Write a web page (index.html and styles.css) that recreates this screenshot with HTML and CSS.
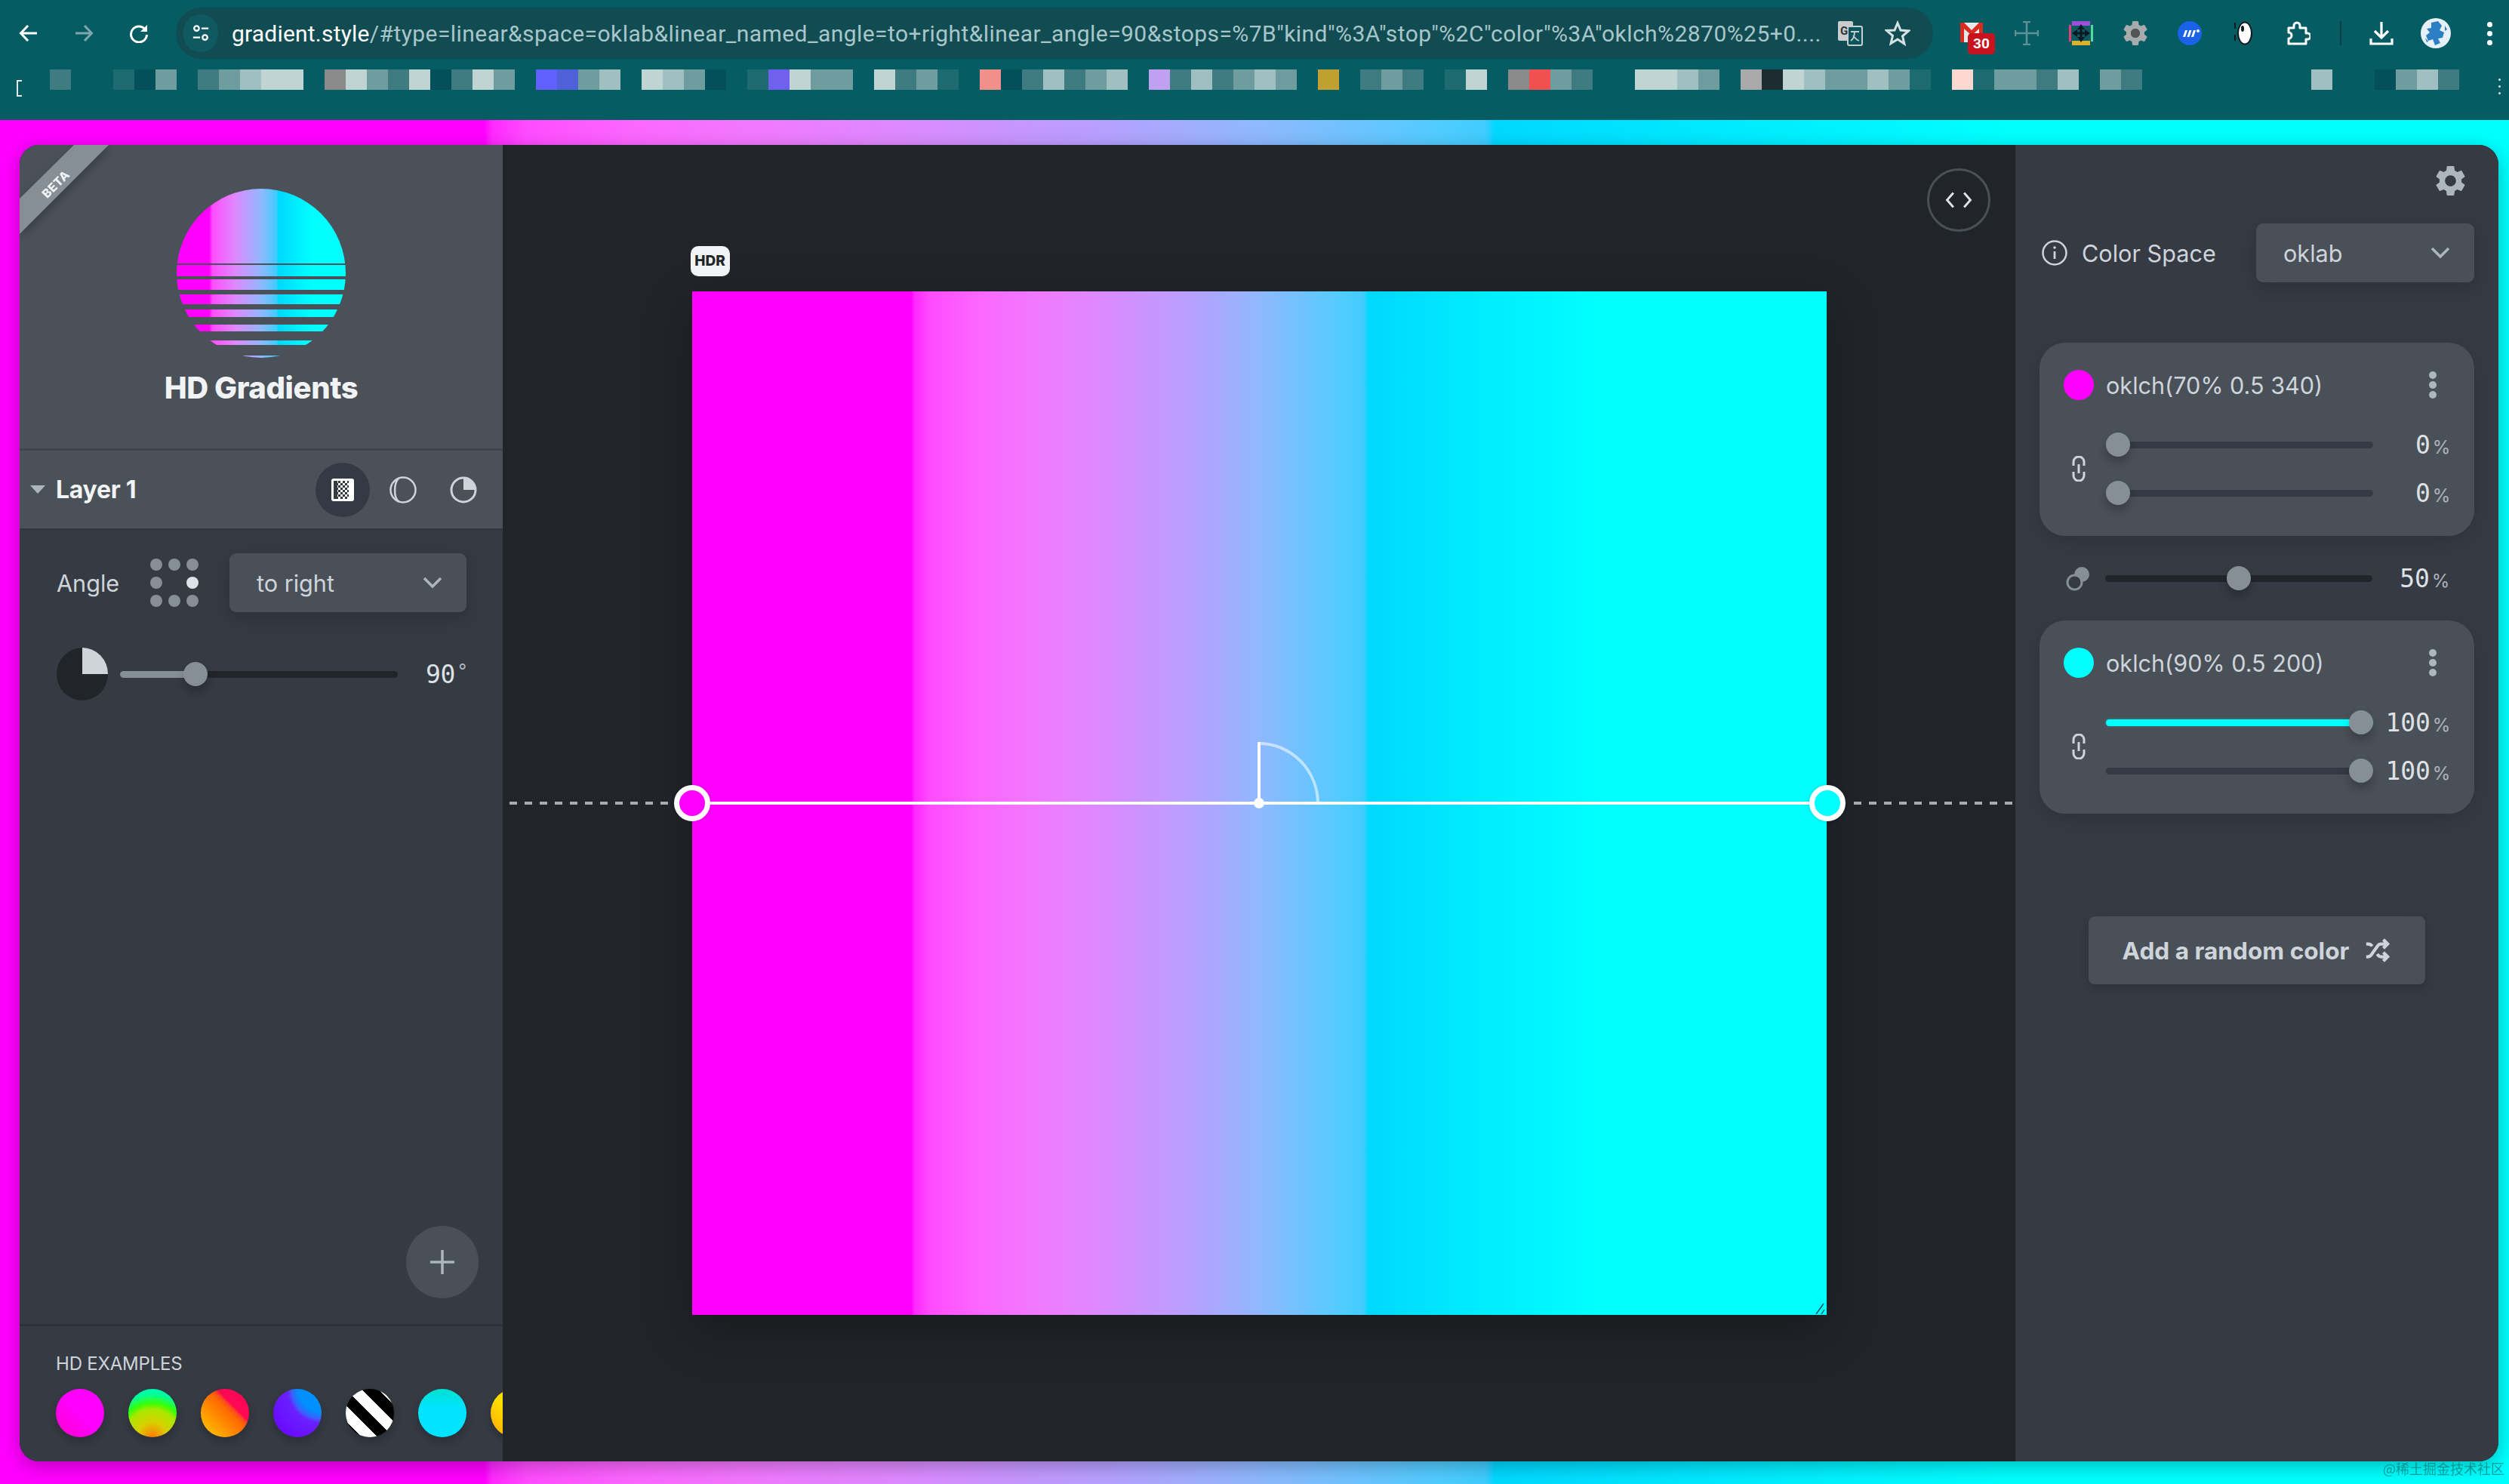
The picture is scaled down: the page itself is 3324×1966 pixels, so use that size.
FILE: index.html
```html
<!DOCTYPE html>
<html lang="en">
<head>
<meta charset="utf-8">
<title>HD Gradients</title>
<link rel="stylesheet" href="styles.css">
</head>
<body>
<header class="chrome">
  <div class="toolbar">
    <div class="nav">
      <svg class="nav-icon" viewBox="0 0 26 26"><path d="M24 13H3M12 3 2.500 13 12 23" fill="none" stroke="#fff" stroke-width="3"/></svg>
      <svg class="nav-icon" viewBox="0 0 26 26"><path d="M2 13h21M14 3l9.500 10L14 23" fill="none" stroke="#7fa6aa" stroke-width="3"/></svg>
      <svg class="nav-icon" viewBox="0 0 26 26"><path d="M22 9a10.500 10.500 0 1 0 1.500 6" fill="none" stroke="#fff" stroke-width="3"/><path d="M24 2v9h-9z" fill="#fff"/></svg>
    </div>
    <div class="omnibox">
      <span class="site-chip"><svg viewBox="0 0 26 26" class="chip-icon"><circle cx="7" cy="6" r="3.500" fill="none" stroke="#fff" stroke-width="2.500"/><path d="M14 6h10M2 19h10" stroke="#fff" stroke-width="2.500"/><circle cx="19" cy="19" r="3.500" fill="none" stroke="#fff" stroke-width="2.500"/></svg></span>
      <span class="url"><span class="host">gradient.style</span>/#type=linear&amp;space=oklab&amp;linear_named_angle=to+right&amp;linear_angle=90&amp;stops=%7B"kind"%3A"stop"%2C"color"%3A"oklch%2870%25+0....</span>
      <svg class="translate" viewBox="0 0 34 34"><rect x="1" y="1" width="20" height="26" rx="2" fill="#c9cdce"/><rect x="14" y="8" width="19" height="25" rx="2" fill="#0a555b" stroke="#c9cdce" stroke-width="2"/><text x="4" y="19" class="translate-g">G</text><path d="M18 15h11M23 15c0 6-2 10-5 12M21 20c2 3 5 6 8 7" fill="none" stroke="#c9cdce" stroke-width="1.800"/></svg>
      <svg class="star" viewBox="0 0 34 34"><path d="M17 3.500l4 9.500 10.500.9-8 6.900 2.400 10.200L17 25l-8.900 5.500 2.400-10.200-8-6.900L13 13z" fill="none" stroke="#d5e2e3" stroke-width="3"/></svg>
    </div>
    <div class="exts">
      <span class="ext"><svg class="ext-icon" viewBox="0 0 32 32"><rect x="0" y="2" width="30" height="26" fill="#e8e8e8"/><path d="M0 2h5l10 10L25 2h5v26h-5V10L15 19 5 10v18H0z" fill="#d92b20"/></svg><span class="badge">30</span></span>
      <span class="ext"><svg class="ext-icon" viewBox="0 0 32 32"><path d="M16 1v30M1 16h30M11 1h10M11 31h10M1 12v8M31 12v8" stroke="#5f9094" stroke-width="2.500" fill="none"/></svg></span>
      <span class="ext"><svg class="ext-icon" viewBox="0 0 32 32"><rect width="32" height="32" fill="#0e5a60"/><rect x="4" width="24" height="6" fill="#9b4fdc"/><rect x="4" y="26" width="24" height="6" fill="#d9b32e"/><rect y="5" width="3" height="22" fill="#e0407a"/><rect x="29" y="5" width="3" height="22" fill="#4fdc9c"/><path d="M16 4l5 7h-3.500v3.500H21V11l7 5-7 5v-3.500h-3.500V21H21l-5 7-5-7h3.500v-3.500H11V21l-7-5 7-5v3.500h3.500V11H11z" fill="#0a1a20"/></svg></span>
      <span class="ext"><svg class="ext-icon" viewBox="2.400 2.400 19.200 19.200"><path class="gear-path" fill="#a8abac" d="M19.140 12.940c.04-.3.06-.61.06-.94 0-.32-.02-.64-.07-.94l2.030-1.580a.49.49 0 0 0 .12-.61l-1.920-3.320a.488.488 0 0 0-.59-.22l-2.390.96c-.5-.38-1.030-.7-1.620-.94l-.36-2.540a.484.484 0 0 0-.48-.41h-3.840c-.24 0-.43.17-.47.41l-.36 2.540c-.59.24-1.130.57-1.620.94l-2.390-.96c-.22-.08-.47 0-.59.22L2.740 8.870c-.12.21-.08.47.12.61l2.030 1.580c-.05.3-.09.63-.09.94s.02.64.07.94l-2.030 1.580a.49.49 0 0 0-.12.61l1.920 3.320c.12.22.37.29.59.22l2.390-.96c.5.38 1.030.7 1.620.94l.36 2.540c.05.24.24.41.48.41h3.840c.24 0 .44-.17.47-.41l.36-2.540c.59-.24 1.130-.56 1.620-.94l2.390.96c.22.08.47 0 .59-.22l1.920-3.320c.12-.22.07-.47-.12-.61l-2.010-1.580zM12 15.600c-1.980 0-3.600-1.620-3.600-3.600s1.620-3.600 3.600-3.600 3.600 1.620 3.600 3.600-1.620 3.600-3.600 3.600z"/><circle cx="12" cy="12" r="3.600" fill="#555"/></svg></span>
      <span class="ext"><svg class="ext-icon" viewBox="0 0 32 32"><circle cx="16" cy="16" r="16" fill="#1a62e8"/><path d="M7 21l3-9h3l-3 9zM12.500 21l3-9h3l-3 9zM18 21l3-9h3l-3 9z" fill="#fff"/><circle cx="27" cy="13" r="2" fill="#fff"/></svg></span>
      <span class="ext"><svg class="ext-icon" viewBox="0 0 32 32"><path d="M4 2v8M4 18v8" stroke="#0a1a20" stroke-width="2"/><ellipse cx="17" cy="16" rx="9" ry="14.500" fill="#fff" stroke="#0a1a20" stroke-width="2"/><ellipse cx="14" cy="10" rx="2" ry="4" fill="#0a1a20"/></svg></span>
      <span class="ext"><svg class="ext-icon" viewBox="0 0 32 32"><path d="M3 9h7V6a4 4 0 0 1 8 0v3h8v7h2a4 4 0 0 1 0 8h-2v6H3v-7a4 4 0 0 0 0-8z" fill="none" stroke="#fff" stroke-width="3" stroke-linejoin="round"/></svg></span>
      <span class="sep"></span>
      <span class="ext ext-dl"><svg class="ext-icon" viewBox="0 0 34 34"><path d="M17 2v20M8 14l9 9 9-9M3 24v7h28v-7" fill="none" stroke="#fff" stroke-width="3.200"/></svg></span>
      <span class="ext"><svg class="avatar" viewBox="0 0 40 40"><circle cx="20" cy="20" r="20" fill="#e6f0f8"/><path d="M14 6l9-2 5 6-3 6 6 3-2 7-6 1 3 6-7 3-3-8-6 2-3-7 5-4-4-5 6-1zM32 10l3 5-3 2zM6 26l4 5-2 1z" fill="#2d7fc4"/></svg></span>
      <span class="ext ext-last"><span class="kebab kebab-light"><i></i><i></i><i></i></span></span>
    </div>
  </div>
  <div class="bookmarks">
    <span class="bm-bracket"></span>
    <div class="bm-cells">
      <i class="a"></i><i></i><i></i><i class="z"></i><i class="e"></i><i class="b"></i><i></i><i class="a"></i><i class="b"></i><i class="c"></i><i class="d"></i><i class="d"></i><i></i><i class="gr"></i><i class="d"></i><i class="b"></i><i class="a"></i><i class="d"></i><i class="e"></i><i class="a"></i><i class="d"></i><i class="b"></i><i></i><i class="v1"></i><i class="v2"></i><i class="b"></i><i class="c"></i><i></i><i class="d"></i><i class="c"></i><i class="b"></i><i class="e"></i><i></i><i class="z"></i><i class="v3"></i><i class="d"></i><i class="b"></i><i class="b"></i><i></i><i class="d"></i><i class="a"></i><i class="b"></i><i class="z"></i><i></i><i class="p1"></i><i class="e"></i><i class="a"></i><i class="c"></i><i class="a"></i><i class="b"></i><i class="c"></i><i></i><i class="v4"></i><i class="a"></i><i class="c"></i><i class="a"></i><i class="b"></i><i class="c"></i><i class="b"></i><i></i><i class="g1"></i><i></i><i class="a"></i><i class="b"></i><i class="a"></i><i></i><i class="z"></i><i class="d"></i><i></i><i class="gr"></i><i class="r1"></i><i class="b"></i><i class="a"></i><i></i><i></i><i class="d"></i><i class="d"></i><i class="c"></i><i class="b"></i><i></i><i class="gr2"></i><i class="k"></i><i class="d"></i><i class="c"></i><i class="b"></i><i class="b"></i><i class="c"></i><i class="b"></i><i class="z"></i><i></i><i class="p2"></i><i class="z"></i><i class="b"></i><i class="b"></i><i class="a"></i><i class="c"></i><i></i><i class="b"></i><i class="a"></i><i></i><i></i><i></i><i></i><i></i><i></i><i></i><i></i><i class="c"></i><i></i><i></i><i class="e"></i><i class="b"></i><i class="c"></i><i class="a"></i>
    </div>
    <span class="kebab kebab-tiny"><i></i><i></i><i></i></span>
  </div>
</header>

<div class="page">
  <main class="app">
    <aside class="sidebar">
      <svg class="ribbon" viewBox="0 0 118 118"><polygon points="72,0 118,0 0,118 0,71" fill="#868e96"/><text x="0" y="0" class="ribbon-text" transform="translate(52 56) rotate(-45)">BETA</text></svg>
      <section class="brand">
        <svg class="logo" viewBox="0 0 224 224">
          <defs>
            <linearGradient id="hdg" x1="0" x2="1" y1="0" y2="0">
              <stop offset=".193" stop-color="#f0f"/><stop offset=".21" stop-color="#ff4cff"/><stop offset=".345" stop-color="#df88ff"/><stop offset=".5" stop-color="#90b8ff"/><stop offset=".592" stop-color="#40ccff"/><stop offset=".6" stop-color="#00d8ff"/><stop offset=".8" stop-color="#0ff"/>
            </linearGradient>
            <clipPath id="sun"><rect y="0" width="224" height="99"/><rect y="101" width="224" height="15"/><rect y="120" width="224" height="14"/><rect y="140" width="224" height="13"/><rect y="160" width="224" height="10"/><rect y="180" width="224" height="9"/><rect y="201" width="224" height="6"/><rect y="221" width="224" height="3"/></clipPath>
          </defs>
          <circle cx="112" cy="112" r="112" fill="url(#hdg)" clip-path="url(#sun)"/>
        </svg>
        <h1 class="title">HD Gradients</h1>
      </section>

      <div class="layer-head">
        <span class="tri"></span>
        <span class="layer-name">Layer 1</span>
        <div class="tabs">
          <span class="tab tab-on"><svg class="tab-icon-sm" viewBox="0 0 30 30"><defs><pattern id="chk" width="6" height="6" patternUnits="userSpaceOnUse"><rect width="3" height="3" fill="#343a40"/><rect x="3" y="3" width="3" height="3" fill="#343a40"/></pattern></defs><rect width="30" height="30" rx="3" fill="#fff"/><rect x="3" y="3" width="5" height="24" fill="#343a40"/><rect x="8" y="3" width="15" height="24" fill="url(#chk)"/></svg></span>
          <span class="tab"><svg class="tab-icon" viewBox="0 0 36 36"><circle cx="18" cy="18" r="16.500" fill="none" stroke="#ced4da" stroke-width="2.500"/><path d="M12 3C6 8 5 28 12 33" fill="none" stroke="#ced4da" stroke-width="2.500"/></svg></span>
          <span class="tab"><svg class="tab-icon" viewBox="0 0 36 36"><circle cx="18" cy="18" r="16" fill="none" stroke="#ced4da" stroke-width="3"/><path d="M18 18V2a16 16 0 0 1 16 16z" fill="#ced4da"/></svg></span>
        </div>
      </div>

      <div class="layer-body">
        <div class="angle-row">
          <span class="angle-label">Angle</span>
          <div class="dots"><i></i><i></i><i></i><i></i><b></b><i class="dot-on"></i><i></i><i></i><i></i></div>
          <div class="select select-angle"><span>to right</span><svg class="chev" viewBox="0 0 26 16"><path d="M2 2l11 11L24 2" fill="none" stroke="#adb5bd" stroke-width="3.500"/></svg></div>
        </div>
        <div class="angle-slider">
          <span class="pie"></span>
          <div class="track track-angle"><span class="fill fill-angle"></span><span class="thumb thumb-angle"></span></div>
          <span class="deg">90<small>°</small></span>
        </div>
        <button class="add-layer"><svg viewBox="0 0 34 34" class="plus"><path d="M17 1v32M1 17h32" stroke="#adb5bd" stroke-width="3.500"/></svg></button>
      </div>

      <footer class="examples">
        <div class="ex-label">HD EXAMPLES</div>
        <div class="ex-row">
          <span class="ex ex1"></span><span class="ex ex2"></span><span class="ex ex3"></span><span class="ex ex4"></span><span class="ex ex5"></span><span class="ex ex6"></span><span class="ex ex7"></span>
        </div>
      </footer>
    </aside>

    <section class="stage">
      <button class="code-btn"><svg viewBox="0 0 32 20" class="code-icon"><path d="M10 2 3 10l7 8M22 2l7 8-7 8" fill="none" stroke="#dee2e6" stroke-width="2.500"/></svg></button>
      <div class="canvas">
        <span class="hdr">HDR</span>
        <div class="axis">
          <span class="dash dash-l"></span>
          <span class="line"></span>
          <span class="dash dash-r"></span>
          <span class="handle handle-l"></span>
          <span class="handle handle-r"></span>
          <span class="pivot"></span>
        </div>
        <svg class="arc" viewBox="0 0 84 84"><path d="M2 2a78 80 0 0 1 78 80" fill="none" stroke="#fff" stroke-opacity=".55" stroke-width="4"/><path d="M2 0v84" stroke="#fff" stroke-width="4"/></svg>
        <svg class="grip" viewBox="0 0 14 16"><path d="M1 15 11 1M8 15l4-6" stroke="#0b4a52" stroke-width="1.300"/></svg>
      </div>
    </section>

    <aside class="panel">
      <div class="gear-row"><svg class="gear" viewBox="2.400 2.400 19.200 19.200"><path fill="#adb5bd" d="M19.140 12.940c.04-.3.06-.61.06-.94 0-.32-.02-.64-.07-.94l2.030-1.580a.49.49 0 0 0 .12-.61l-1.920-3.320a.488.488 0 0 0-.59-.22l-2.390.96c-.5-.38-1.030-.7-1.620-.94l-.36-2.540a.484.484 0 0 0-.48-.41h-3.840c-.24 0-.43.17-.47.41l-.36 2.540c-.59.24-1.130.57-1.620.94l-2.390-.96c-.22-.08-.47 0-.59.22L2.740 8.870c-.12.21-.08.47.12.61l2.030 1.580c-.05.3-.09.63-.09.94s.02.64.07.94l-2.030 1.580a.49.49 0 0 0-.12.61l1.920 3.320c.12.22.37.29.59.22l2.390-.96c.5.38 1.030.7 1.620.94l.36 2.540c.05.24.24.41.48.41h3.840c.24 0 .44-.17.47-.41l.36-2.540c.59-.24 1.130-.56 1.620-.94l2.390.96c.22.08.47 0 .59-.22l1.920-3.320c.12-.22.07-.47-.12-.61l-2.010-1.580zM12 15.600c-1.980 0-3.600-1.620-3.600-3.600s1.620-3.600 3.600-3.600 3.600 1.620 3.600 3.600-1.620 3.600-3.600 3.600z"/></svg></div>

      <div class="space-row">
        <svg class="info" viewBox="0 0 34 34"><circle cx="17" cy="17" r="15.500" fill="none" stroke="#ced4da" stroke-width="2.500"/><path d="M17 15v10" stroke="#ced4da" stroke-width="2.800"/><circle cx="17" cy="10" r="1.800" fill="#ced4da"/></svg>
        <span class="space-label">Color Space</span>
        <div class="select select-space"><span>oklab</span><svg class="chev" viewBox="0 0 26 16"><path d="M2 2l11 11L24 2" fill="none" stroke="#adb5bd" stroke-width="3.500"/></svg></div>
      </div>

      <div class="card">
        <div class="card-head">
          <span class="swatch swatch-m"></span>
          <span class="color-name">oklch(70% 0.5 340)</span>
          <span class="kebab"><i></i><i></i><i></i></span>
        </div>
        <div class="sliders">
          <svg class="link" viewBox="0 0 18 34"><path d="M2 13V8a7 7 0 0 1 14 0v5M2 21v5a7 7 0 0 0 14 0v-5M9 11v12" fill="none" stroke="#ced4da" stroke-width="3"/></svg>
          <div class="slider-stack">
            <div class="slider-row"><div class="track"><span class="thumb thumb-start"></span></div><span class="val">0<small>%</small></span></div>
            <div class="slider-row"><div class="track"><span class="thumb thumb-start"></span></div><span class="val">0<small>%</small></span></div>
          </div>
        </div>
      </div>

      <div class="mix-row">
        <svg class="mix" viewBox="0 0 32 33"><circle cx="21" cy="11" r="10" fill="#868e96"/><circle cx="11.500" cy="21.500" r="9.500" fill="#343a43" stroke="#868e96" stroke-width="3"/></svg>
        <div class="slider-row"><div class="track track-dark"><span class="thumb thumb-mid"></span></div><span class="val">50<small>%</small></span></div>
      </div>

      <div class="card">
        <div class="card-head">
          <span class="swatch swatch-c"></span>
          <span class="color-name">oklch(90% 0.5 200)</span>
          <span class="kebab"><i></i><i></i><i></i></span>
        </div>
        <div class="sliders">
          <svg class="link" viewBox="0 0 18 34"><path d="M2 13V8a7 7 0 0 1 14 0v5M2 21v5a7 7 0 0 0 14 0v-5M9 11v12" fill="none" stroke="#ced4da" stroke-width="3"/></svg>
          <div class="slider-stack">
            <div class="slider-row"><div class="track track-cyan"><span class="thumb thumb-end"></span></div><span class="val">100<small>%</small></span></div>
            <div class="slider-row"><div class="track"><span class="thumb thumb-end"></span></div><span class="val">100<small>%</small></span></div>
          </div>
        </div>
      </div>

      <button class="random">Add a random color<svg class="shuffle" viewBox="0 0 24 24"><path d="M2 18h1.400c1.300 0 2.500-.6 3.300-1.700l6.100-8.600c.7-1.100 2-1.700 3.300-1.700H22M18 2l4 4-4 4M2 6h1.900c1.500 0 2.900.9 3.600 2.200M22 18h-5.900c-1.300 0-2.600-.7-3.300-1.800l-.5-.8M18 14l4 4-4 4" fill="none" stroke="#ced4da" stroke-width="3"/></svg></button>
    </aside>
  </main>
  <span class="watermark">@稀土掘金技术社区</span>
</div>
</body>
</html>
```

FILE: styles.css
```css
:root {
  --hd: linear-gradient(90deg, #f0f 19.3%, #ff28ff 19.6%, #ff4cff 21%, #fc66ff 25%, #f278ff 30%, #df88ff 35.5%, #b6a0ff 44.1%, #90b8ff 50%, #50ccff 57.4%, #40ccff 59.2%, #00d8ff 59.6%, #00e4ff 65.4%, #0ff 80%);
  --ui: "Inter", "Liberation Sans", sans-serif;
  --mono: "DejaVu Sans Mono", "Liberation Mono", monospace;
}
* { box-sizing: border-box; }
html, body { margin: 0; padding: 0; }
body {
  width: 3324px;
  height: 1966px;
  overflow: hidden;
  display: flex;
  flex-direction: column;
  font-family: var(--ui);
  color: #ced4da;
  background: #065c63;
}
button { font-family: inherit; border: 0; padding: 0; }

/* browser chrome */
.chrome { height: 159px; flex: none; background: #065c63; }
.toolbar { height: 88px; padding-top: 10px; display: flex; align-items: flex-start; }
.nav { width: 233px; height: 68px; padding-left: 25px; display: flex; align-items: center; gap: 47px; }
.nav-icon { width: 26px; height: 26px; }
.omnibox {
  width: 2328px; height: 68px; border-radius: 34px; background: #124c53;
  display: flex; align-items: center; padding-left: 10px; flex: none;
}
.site-chip { width: 46px; height: 50px; border-radius: 25px; background: #0f5a61; display: flex; align-items: center; justify-content: center; flex: none; }
.chip-icon { width: 24px; height: 24px; }
.url { margin-left: 18px; width: 2114px; flex: none; font-family: "Roboto", sans-serif; font-size: 30px; letter-spacing: .44px; color: #a8c6c9; white-space: nowrap; overflow: hidden; }
.host { color: #fff; letter-spacing: .2px; }
.translate { width: 34px; height: 34px; margin-left: 13px; flex: none; }
.translate-g { font: 700 15px "Roboto", sans-serif; fill: #333; }
.star { width: 34px; height: 34px; margin-left: 29px; flex: none; }
.exts { display: flex; align-items: center; height: 68px; margin-left: 16px; }
.ext { width: 72px; height: 68px; display: flex; align-items: center; justify-content: center; position: relative; flex: none; }
.ext-icon { width: 32px; height: 32px; }
.ext-dl { margin-left: 17px; }
.ext-dl .ext-icon { width: 34px; height: 34px; }
.ext-last { width: 50px; margin-left: 10px; }
.avatar { width: 40px; height: 40px; }
.badge {
  position: absolute; left: 30px; top: 34px; width: 36px; height: 28px; border-radius: 5px;
  background: #c8131e; color: #fff; font: 700 19px/28px "Roboto", sans-serif; text-align: center;
}
.sep { width: 2px; height: 32px; background: #0a3f45; margin-left: 19px; flex: none; }
.kebab { display: flex; flex-direction: column; gap: 3px; align-items: center; }
.kebab i { width: 10px; height: 10px; border-radius: 50%; background: #adb5bd; display: block; }
.kebab-light { gap: 5px; }
.kebab-light i { width: 7px; height: 7px; background: #fff; }
.bookmarks { height: 71px; position: relative; padding: 4px 0 0 66px; }
.bm-bracket { position: absolute; left: 22px; top: 18px; width: 7px; height: 22px; border: 2px solid #e0e8e8; border-right: 0; }
.bm-cells { display: flex; height: 27px; }
.bm-cells i { width: 28px; height: 27px; flex: none; display: block; }
.bm-cells .a { background: #3f7c82; }
.bm-cells .b { background: #6f9c9f; }
.bm-cells .c { background: #a0bfc0; }
.bm-cells .d { background: #c0d4d4; }
.bm-cells .e { background: #04505a; }
.bm-cells .z { background: #1d6a70; }
.bm-cells .gr { background: #8a8a8a; }
.bm-cells .gr2 { background: #aaaaaa; }
.bm-cells .k { background: #1c2c30; }
.bm-cells .v1 { background: #6060ff; }
.bm-cells .v2 { background: #4f60d8; }
.bm-cells .v3 { background: #7060f0; }
.bm-cells .v4 { background: #c0a0f0; }
.bm-cells .p1 { background: #f09088; }
.bm-cells .p2 { background: #fdd8d0; }
.bm-cells .g1 { background: #c0a030; }
.bm-cells .r1 { background: #f05050; }
.kebab-tiny { position: absolute; left: 3310px; top: 16px; gap: 6px; }
.kebab-tiny i { width: 3px; height: 3px; background: #e0e8e8; }

/* page */
.page { flex: 1; background: var(--hd); padding: 33px 14px 30px 26px; position: relative; display: flex; min-height: 0; }
.app {
  flex: 1; display: flex; border-radius: 26px; overflow: hidden; background: #212529;
  box-shadow: 0 6px 24px rgba(0, 0, 0, .28);
}
.watermark {
  position: absolute; right: 6px; bottom: 8px; font: 18px "Noto Sans CJK SC", sans-serif;
  color: rgba(0, 90, 90, .55); filter: blur(.4px);
}

/* left sidebar */
.sidebar { width: 640px; flex: none; display: flex; flex-direction: column; background: #353a43; position: relative; overflow: hidden; }
.ribbon { position: absolute; left: 0; top: 0; width: 118px; height: 118px; filter: drop-shadow(2px 4px 6px rgba(0, 0, 0, .25)); }
.ribbon-text { font: 800 16px var(--ui); fill: #f1f3f5; text-anchor: middle; letter-spacing: .5px; }
.brand { height: 405px; flex: none; background: #4a5159; border-bottom: 3px solid #3f454d; display: flex; flex-direction: column; align-items: center; padding-top: 57px; }
.logo { width: 224px; height: 226px; flex: none; }
.title { margin: 15px 0 0; font-size: 40px; line-height: 48px; font-weight: 800; color: #f1f3f5; letter-spacing: -.4px; }
.layer-head { height: 103px; flex: none; background: #4a5159; display: flex; align-items: center; padding: 0 16px 0 14px; box-shadow: 0 2px 4px rgba(0, 0, 0, .1); position: relative; }
.tri { width: 0; height: 0; border-left: 10.500px solid transparent; border-right: 10.500px solid transparent; border-top: 11px solid #adb5bd; margin-right: 14px; flex: none; }
.layer-name { font-size: 32px; font-weight: 700; color: #f1f3f5; letter-spacing: -.3px; }
.tabs { margin-left: auto; display: flex; gap: 8px; }
.tab { width: 72px; height: 72px; border-radius: 50%; display: flex; align-items: center; justify-content: center; }
.tab-on { background: #343a43; }
.tab-icon { width: 36px; height: 36px; }
.tab-icon-sm { width: 30px; height: 30px; }
.layer-body { flex: 1; min-height: 0; display: flex; flex-direction: column; padding: 33px 32px 34px 49px; }
.angle-row { display: flex; align-items: center; height: 78px; margin-right: 15px; }
.angle-label { width: 124px; font-size: 30.600px; flex: none; }
.dots { width: 63px; display: grid; grid-template-columns: repeat(3, 16px); column-gap: 8px; row-gap: 8px; flex: none; margin-right: 42px; }
.dots i, .dots b { width: 16px; height: 16px; border-radius: 50%; background: #868e96; display: block; }
.dots b { background: transparent; }
.dots .dot-on { background: #dee2e6; }
.select { height: 78px; border-radius: 9px; background: #495057; display: flex; align-items: center; justify-content: space-between; font-size: 30.600px; flex: none; box-shadow: 0 8px 24px rgba(0, 0, 0, .16); }
.select-angle { width: 314px; padding: 0 32px 0 36px; }
.select-space { width: 289px; padding: 0 32px 0 36px; margin-left: auto; }
.chev { width: 26px; height: 16px; }
.angle-slider { display: flex; align-items: center; margin: 47px 16px 0 0; height: 70px; }
.pie { width: 68px; height: 70px; border-radius: 50%; background: conic-gradient(#ced4da 0 25%, #212529 25% 100%); flex: none; }
.track { height: 9px; border-radius: 5px; background: #343a43; position: relative; width: 354px; flex: none; }
.track-angle { width: 368px; margin-left: 16px; background: #212529; }
.track-dark { background: #212529; }
.track-cyan { background: #0ff; box-shadow: 0 0 3px rgba(0, 255, 255, .4); }
.fill { position: absolute; left: 0; top: 0; bottom: 0; border-radius: 5px; background: #868e96; }
.fill-angle { width: 100px; }
.thumb {
  position: absolute; top: 50%; width: 32px; height: 32px; margin-top: -16px; border-radius: 50%;
  background: #868e96; box-shadow: 0 8px 12px rgba(0, 0, 0, .22);
}
.thumb-angle { left: 84px; }
.thumb-start { left: 0; }
.thumb-mid { left: 161px; }
.thumb-end { right: 0; }
.deg { margin-left: auto; font: 33px var(--mono); color: #dee2e6; letter-spacing: -.2px; }
.deg small { font: 24px var(--ui); color: #adb5bd; margin-left: 4px; vertical-align: 8px; }
.add-layer { margin-top: auto; align-self: flex-end; width: 96px; height: 96px; border-radius: 50%; background: #495057; display: flex; align-items: center; justify-content: center; }
.plus { width: 34px; height: 34px; }
.examples { height: 182px; flex: none; border-top: 3px solid #2c3038; padding: 35px 0 0 48px; overflow: hidden; }
.ex-label { font-size: 24px; line-height: 30px; color: #ced4da; letter-spacing: -.2px; }
.ex-row { display: flex; gap: 32px; margin-top: 18px; }
.ex { width: 64px; height: 64px; border-radius: 50%; flex: none; box-shadow: 0 6px 12px rgba(0, 0, 0, .2); }
.ex1 { background: linear-gradient(45deg, #ff00c8, #f0f 50%); }
.ex2 { background: radial-gradient(circle at 50% 100%, #ff7a00 0, #d8d000 28%, #a8e800 52%, #3cff00 62%, #00ffa0 80%, #00f0c0 100%); }
.ex3 { background: linear-gradient(45deg, #ffc800 5%, #ff6a00 55%, #ff4a20 62%, #ff0a50 66%, #ff0060 100%); }
.ex4 { background: radial-gradient(circle at 100% 0, #0090ff 0 34%, #3a60ff 44%, #6a20ff 50%, #6a00ff 100%); }
.ex5 { background: repeating-linear-gradient(45deg, #000 0 15px, #fff 15px 30px); }
.ex6 { background: linear-gradient(180deg, #00e0d0, #00e4ff 40%); }
.ex7 { background: linear-gradient(45deg, #ffa800, #ffdc00 45%); }

/* stage */
.stage { flex: 1; min-width: 0; position: relative; display: flex; align-items: center; justify-content: center; background: #212529; }
.code-btn { position: absolute; top: 31px; right: 33px; width: 84px; height: 84px; border-radius: 50%; background: #212529; border: 3px solid #495057; display: flex; align-items: center; justify-content: center; }
.code-icon { width: 38px; height: 24px; }
.canvas { width: 1503px; height: 1356px; background: var(--hd); position: relative; flex: none; box-shadow: 0 20px 60px rgba(0, 0, 0, .3); }
.hdr { position: absolute; left: -2px; top: -60px; width: 52px; height: 40px; border-radius: 10px; background: #f1f3f5; color: #212529; font: 800 19px/40px var(--ui); text-align: center; }
.axis { position: absolute; left: 0; right: 0; top: 678px; height: 0; }
.line { position: absolute; left: 24px; right: 0; top: -2px; height: 4px; background: #fff; }
.dash { position: absolute; top: -2px; height: 4px; background: repeating-linear-gradient(90deg, #a8acaf 0 10px, transparent 10px 20px); }
.dash-l { left: -242px; width: 211px; }
.dash-r { left: 1539px; width: 210px; }
.handle { position: absolute; top: -24px; width: 48px; height: 48px; border-radius: 50%; border: 7px solid #fff; box-shadow: 0 0 4px rgba(0, 0, 0, .2); }
.handle-l { left: -24px; background: #f0f; }
.handle-r { left: 1480px; background: #0ff; }
.pivot { position: absolute; left: 744px; top: -7px; width: 14px; height: 14px; border-radius: 50%; background: #fff; }
.arc { position: absolute; left: 749px; top: 597px; width: 84px; height: 84px; }
.grip { position: absolute; right: 1px; bottom: 0; width: 14px; height: 16px; }

/* right panel */
.panel { width: 640px; flex: none; background: #353a43; display: flex; flex-direction: column; padding: 27px 32px 0; }
.gear-row { display: flex; justify-content: flex-end; padding-right: 12px; height: 41px; flex: none; }
.gear { width: 39px; height: 41px; }
.space-row { display: flex; align-items: center; height: 78px; margin-top: 36px; padding-left: 3px; flex: none; }
.info { width: 34px; height: 34px; flex: none; }
.space-label { margin-left: 19px; font-size: 30.600px; }
.card { width: 576px; height: 256px; flex: none; margin-top: 80px; border-radius: 34px; background: #495057; padding: 36px 32px 0; box-shadow: 0 8px 24px rgba(0, 0, 0, .12); }
.mix-row + .card { margin-top: 0; }
.card-head { display: flex; align-items: center; height: 40px; }
.swatch { width: 40px; height: 40px; border-radius: 50%; flex: none; }
.swatch-m { background: #f0f; }
.swatch-c { background: #0ff; }
.color-name { margin-left: 16px; font-size: 30.600px; }
.card-head .kebab { margin-left: auto; margin-right: 18px; }
.sliders { display: flex; align-items: center; margin-top: 43px; }
.link { width: 18px; height: 34px; margin-left: 11px; margin-right: 27px; flex: none; }
.slider-stack { display: flex; flex-direction: column; gap: 32px; }
.slider-row { display: flex; align-items: center; height: 32px; }
.val { width: 102px; padding-top: 2px; text-align: right; font: 33px/32px var(--mono); color: #dee2e6; white-space: nowrap; letter-spacing: -.2px; }
.val small { font: 24px var(--ui); color: #adb5bd; margin-left: 3px; }
.mix-row { height: 112px; flex: none; display: flex; align-items: center; padding-left: 35px; }
.mix { width: 32px; height: 33px; flex: none; margin-right: 20px; }
.random { align-self: center; width: 446px; height: 90px; margin-top: 136px; flex: none; border-radius: 8px; background: #495057; color: #ced4da; font-size: 31.600px; font-weight: 700; display: flex; align-items: center; justify-content: center; gap: 18px; box-shadow: 0 6px 16px rgba(0, 0, 0, .14); }
.shuffle { width: 38px; height: 34px; }
```
